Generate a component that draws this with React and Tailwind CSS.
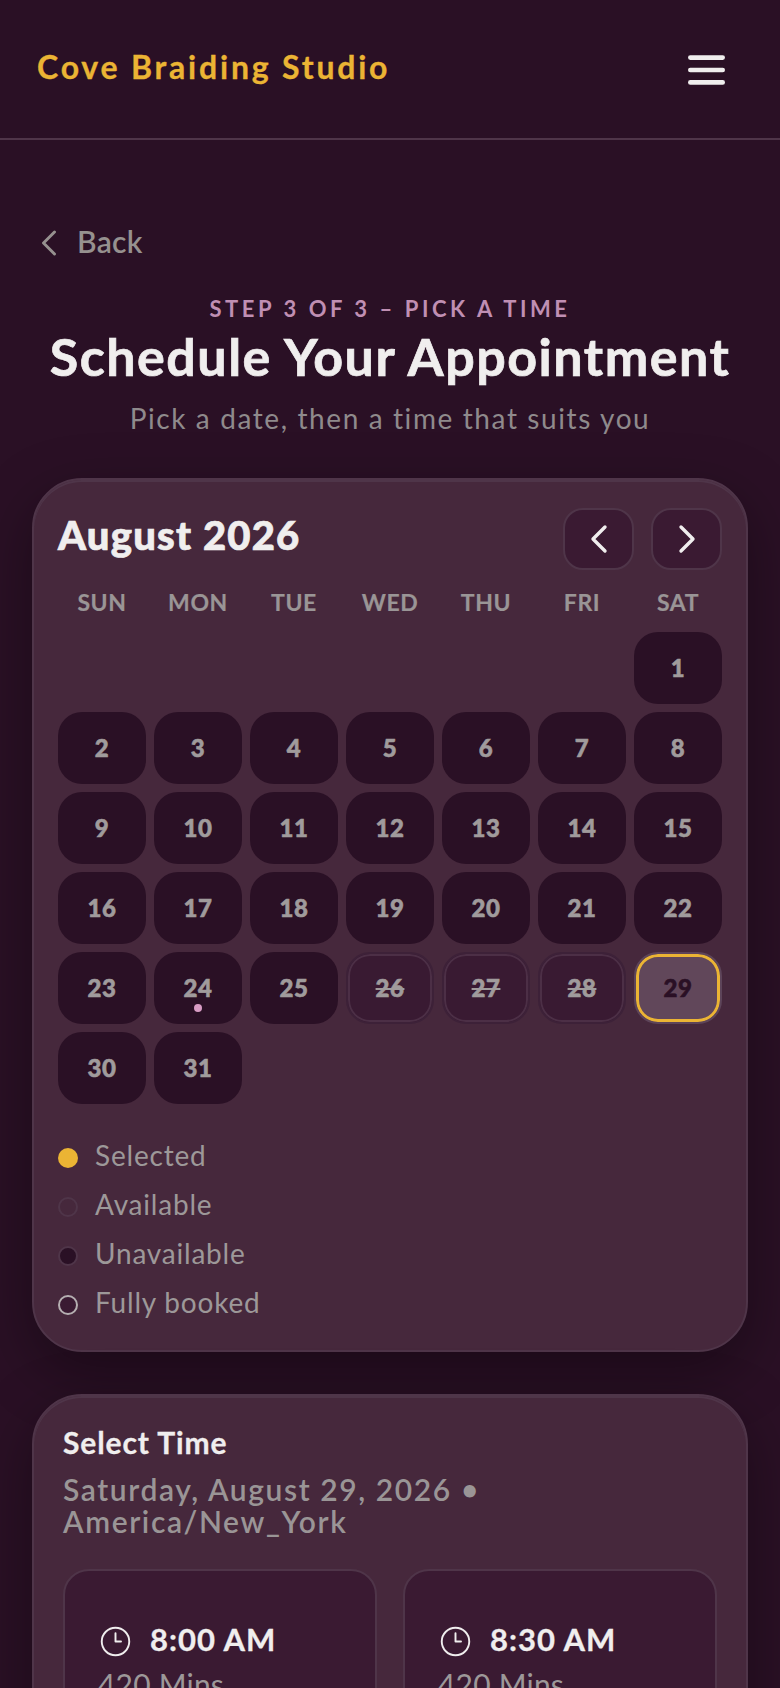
import { ChevronLeft, ChevronRight, Clock3 } from "lucide-react";

const weekdays = ["SUN", "MON", "TUE", "WED", "THU", "FRI", "SAT"];
const days = Array.from({ length: 31 }, (_, i) => i + 1);

function Day({ d }) {
  if (d === 29) {
    return (
      <div className="flex h-[72px] items-center justify-center rounded-[24px] border-2 border-[#5d4459] bg-[#61475a] text-[24px] font-black tracking-[0.5px] text-[#2a1025] shadow-[inset_0_0_0_3px_#ebb434] [-webkit-text-stroke:0.6px_currentColor]">
        {d}
      </div>
    );
  }
  if (d >= 26 && d <= 28) {
    return (
      <div className="flex h-[72px] items-center justify-center rounded-[24px] border-2 border-[#3d2138] bg-[#391a32] text-[24px] font-black tracking-[0.5px] text-[#a09b9c] line-through shadow-[inset_0_0_0_2px_#4c2f46] [-webkit-text-stroke:0.6px_currentColor]">
        {d}
      </div>
    );
  }
  return (
    <div className="relative flex h-[72px] items-center justify-center rounded-[24px] bg-[#2a1025] text-[24px] font-black tracking-[0.5px] text-[#a09b9c] [-webkit-text-stroke:0.6px_currentColor]">
      {d}
      {d === 24 && <span className="absolute bottom-[12px] left-1/2 h-2 w-2 -translate-x-1/2 rounded-full bg-[#d89cc4]" />}
    </div>
  );
}

function Legend({ dot, label }) {
  return (
    <div className="flex h-[49px] items-center gap-[17px]">
      <span className={`h-5 w-5 rounded-full ${dot}`} />
      <span className="-translate-y-[3px] text-[28px] leading-none tracking-[0.8px] text-[#9d9899]">{label}</span>
    </div>
  );
}

function Slot({ time }) {
  return (
    <div className="h-[190px] rounded-[26px] border-2 border-[#4f3549] bg-[#3a1a32] px-[34px] pt-[50px]">
      <div className="flex items-center gap-[18px]">
        <Clock3 size={33} strokeWidth={1.4} className="mt-1 text-[#f0eeee]" />
        <span className="text-[31px] font-bold leading-none tracking-[1px] text-[#f0eeee] [-webkit-text-stroke:0.3px_currentColor]">{time}</span>
      </div>
      <div className="-ml-[1px] mt-[11px] text-[30px] leading-none tracking-[0.2px] text-[#9d9899]">420 Mins</div>
    </div>
  );
}

export default function App() {
  return (
    <div className="h-[1688px] overflow-hidden bg-[#2a1025] font-[Lato,sans-serif]">
      <header className="flex h-[140px] items-center justify-between border-b-2 border-[#4f3549] pl-[37px] pr-[56px]">
        <div className="-mt-[4px] text-[32px] font-bold leading-none tracking-[2.8px] text-[#ebb434] [-webkit-text-stroke:0.3px_currentColor]">Cove Braiding Studio</div>
        <svg width="37" height="30" viewBox="0 0 37 30" fill="none" stroke="#f0eeee" strokeWidth="4.6" strokeLinecap="round" className="-mr-[1px] mt-[1px]">
          <path d="M2.3 2.6h32.4" />
          <path d="M2.3 15h32.4" />
          <path d="M2.3 27.4h32.4" />
        </svg>
      </header>

      <main className="px-8">
        <div className="mt-[79px] flex h-11 items-center gap-[6px] text-[#96918f]">
          <ChevronLeft size={44} strokeWidth={1.6} className="-ml-[5px] mt-1" />
          <span className="text-[30px] font-semibold leading-none tracking-[0.3px]">Back</span>
        </div>

        <div className="mt-[35px] text-center text-[22px] font-bold leading-none tracking-[3.55px] text-[#c08fb3]">STEP 3 OF 3 – PICK A TIME</div>
        <h1 className="mt-[10px] text-center text-[52px] font-bold leading-none tracking-[1.5px] text-[#f0eeee] [-webkit-text-stroke:0.7px_currentColor]">Schedule Your Appointment</h1>
        <p className="mt-[22px] text-center text-[28px] leading-none tracking-[1.6px] text-[#8f8a8c]">Pick a date, then a time that suits you</p>

        <section className="mt-[46px] h-[874px] rounded-[50px] border-2 border-[#4f3549] bg-[#46283c] p-6 shadow-[inset_0_2px_0_#4f3549,0_20px_60px_rgba(0,0,0,0.35)]">
          <div className="mt-1 flex h-[62px] items-center justify-between">
            <div className="-mt-[9px] text-[40px] font-black leading-none tracking-[1.2px] text-[#f0eeee] [-webkit-text-stroke:0.7px_currentColor]">August 2026</div>
            <div className="flex gap-[17px]">
              <button className="flex h-[62px] w-[71px] items-center justify-center rounded-[20px] border-2 border-[#4f3549] bg-[#3a1a32] text-[#f0eeee]">
                <ChevronLeft size={48} strokeWidth={1.7} />
              </button>
              <button className="flex h-[62px] w-[71px] items-center justify-center rounded-[20px] border-2 border-[#4f3549] bg-[#3a1a32] text-[#f0eeee]">
                <ChevronRight size={48} strokeWidth={1.7} />
              </button>
            </div>
          </div>

          <div className="mt-[10px] grid grid-cols-7 gap-x-2 text-center text-[23px] font-bold leading-[44px] tracking-[0.6px] text-[#9a9596] [-webkit-text-stroke:0.2px_currentColor]">
            {weekdays.map((w) => (
              <div key={w} className="h-[44px]">{w}</div>
            ))}
          </div>

          <div className="mt-2 grid grid-cols-7 gap-2">
            {Array.from({ length: 6 }, (_, i) => <div key={`e${i}`} />)}
            {days.map((d) => (
              <Day key={d} d={d} />
            ))}
          </div>

          <div className="mt-[29px]">
            <Legend dot="bg-[#ebb434]" label="Selected" />
            <Legend dot="border-2 border-[#4f3549] bg-[#46283c]" label="Available" />
            <Legend dot="border-2 border-[#4f3549] bg-[#2a1025]" label="Unavailable" />
            <Legend dot="border-2 border-[#b5afb1] bg-[#3a1a32]" label="Fully booked" />
          </div>
        </section>

        <section className="mt-[42px] rounded-[50px] border-2 border-[#4f3549] bg-[#46283c] px-[29px] pt-[31px] pb-8 shadow-[inset_0_2px_0_#4f3549,0_20px_60px_rgba(0,0,0,0.35)]">
          <h2 className="text-[30px] font-bold leading-none tracking-[0.9px] text-[#f0eeee] [-webkit-text-stroke:0.3px_currentColor]">Select Time</h2>
          <p className="mt-[16px] w-[460px] text-[30px] font-semibold leading-[32px] tracking-[1.6px] text-[#9a9596]">Saturday, August 29, 2026 • America/New_York</p>
          <div className="mt-[32px] grid grid-cols-2 gap-[26px]">
            <Slot time="8:00 AM" />
            <Slot time="8:30 AM" />
          </div>
        </section>
      </main>
    </div>
  );
}
